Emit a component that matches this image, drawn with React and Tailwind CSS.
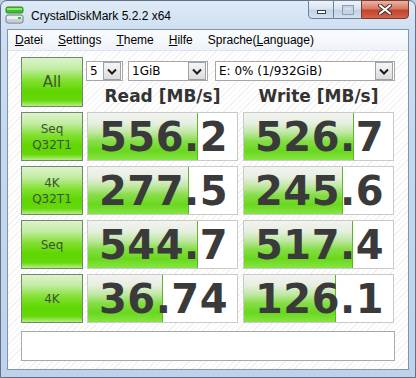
import React from 'react';

const ROWS = [
  { id: 'seq32', top: 'Seq', bottom: 'Q32T1', read: '556.2', rw: 0.74, write: '526.7', ww: 0.735 },
  { id: '4k32', top: '4K', bottom: 'Q32T1', read: '277.5', rw: 0.678, write: '245.6', ww: 0.667 },
  { id: 'seq', top: 'Seq', read: '544.7', rw: 0.737, write: '517.4', ww: 0.733 },
  { id: '4k', top: '4K', read: '36.74', rw: 0.5, write: '126.1', ww: 0.615 },
];

const greenBtn =
  'border border-[#72876c] bg-[linear-gradient(180deg,#dcf3cc_0%,#c2eca4_22%,#7fe02c_48%,#5fd600_70%,#66d80a_88%,#b4ee84_100%)] text-[#3e5233] font-["DejaVu_Sans",sans-serif] flex flex-col items-center justify-center leading-[16px]';

const Arrow = () => (
  <div className="w-[18px] h-[18px] border border-[#9aa3ad] bg-gradient-to-b from-[#f6f6f6] to-[#dcdcdc] flex items-center justify-center">
    <svg width="10" height="7" viewBox="0 0 10 7">
      <path d="M1 1.5 L5 5.5 L9 1.5" fill="none" stroke="#1c1c1c" strokeWidth="2" />
    </svg>
  </div>
);

const Select = ({ w, value }) => (
  <div className={`${w} h-[20px] bg-white border border-[#a7a7a7] flex items-center justify-between pl-[3px] pr-px text-[12px] text-black font-["DejaVu_Sans",sans-serif]`}>
    <span>{value}</span>
    <Arrow />
  </div>
);

const Cell = ({ value, fill }) => (
  <div className="relative w-[151px] h-[49px] bg-white border border-[#cacaca] flex items-center justify-end pr-[9px]">
    <div
      className="absolute left-0 top-0 bottom-0 border-r border-[#5cb82a] bg-[linear-gradient(180deg,#f3f3f1_0%,#e6efe0_22%,#bfe7a0_42%,#86dd48_60%,#69d81c_80%,#86e444_100%)]"
      style={{ width: `${fill * 100}%` }}
    />
    <span className='relative text-[40px] leading-none font-bold text-[#3a3a3a] font-["DejaVu_Sans",sans-serif] tracking-[0.5px]'>
      {value}
    </span>
  </div>
);

const DiskIcon = () => (
  <svg width="19" height="18" viewBox="0 0 19 18">
    <rect x="1" y="1" width="17" height="6" rx="1.5" fill="#3fbf2a" stroke="#2a8f1e" />
    <rect x="2" y="2" width="15" height="2" fill="#8fe57a" />
    <rect x="1" y="9" width="17" height="8" rx="2" fill="#eceff2" stroke="#6b7480" />
    <rect x="2" y="13" width="15" height="3" fill="#c9cfd6" />
    <rect x="13" y="11" width="3" height="2" fill="#39c22a" />
  </svg>
);

export default function App() {
  return (
    <div className="w-[416px] h-[378px] overflow-hidden bg-[#b9cde6]">
      <div className="w-[416px] h-[378px] rounded-t-[7px] border border-[#5f7189] bg-[linear-gradient(180deg,#dfeaf6_0%,#cddff2_8%,#c4d8ee_40%,#bed3eb_100%)] flex flex-col">
        {/* title bar */}
        <div className="h-[28px] relative flex items-center pl-[4px]">
          <DiskIcon />
          <span className='ml-[7px] mt-[1px] text-[12px] text-black font-["Liberation_Sans",sans-serif]'>CrystalDiskMark 5.2.2 x64</span>
          <div className="absolute right-[6px] top-[-1px] flex h-[19px]">
            <div className="w-[26px] h-full border border-[#6e7f96] rounded-bl-[4px] bg-[linear-gradient(180deg,#eef3f9_0%,#d9e4f1_45%,#c2d3e7_55%,#d3e1f0_100%)] flex items-center justify-center">
              <div className="w-[9px] h-[4px] mt-[5px] bg-white border border-[#34404f]" />
            </div>
            <div className="w-[27px] h-full border-y border-[#6e7f96] bg-[linear-gradient(180deg,#eef3f9_0%,#d9e4f1_45%,#c2d3e7_55%,#d3e1f0_100%)] flex items-center justify-center">
              <div className="w-[10px] h-[8px] border-2 border-[#c8d3e0] bg-transparent outline outline-1 outline-[#8f9db0]" />
            </div>
            <div className="w-[48px] h-full border border-[#7a3a33] rounded-br-[4px] bg-[linear-gradient(180deg,#eab3a5_0%,#d77b66_45%,#c4432c_55%,#d2654a_100%)] flex items-center justify-center">
              <svg width="14" height="11" viewBox="0 0 14 11">
                <path d="M2 1.5 L12 9.5 M12 1.5 L2 9.5" stroke="#3b2a28" strokeWidth="4" strokeLinecap="round" />
                <path d="M2 1.5 L12 9.5 M12 1.5 L2 9.5" stroke="#ffffff" strokeWidth="2.2" strokeLinecap="round" />
              </svg>
            </div>
          </div>
        </div>

        {/* client */}
        <div className="mx-[6px] mb-[7px] flex-1 border border-[#8395ad] flex flex-col bg-white">
          <div className='h-[21px] border-b border-[#dde4ee] bg-gradient-to-b from-[#fbfcfe] to-[#eef3f9] flex items-center pl-[7px] gap-[15px] text-[12px] text-black font-["Liberation_Sans",sans-serif]'>
            <span><span className="underline">D</span>atei</span>
            <span><span className="underline">S</span>ettings</span>
            <span><span className="underline">T</span>heme</span>
            <span><span className="underline">H</span>ilfe</span>
            <span>Sprache(<span className="underline">L</span>anguage)</span>
          </div>

          <div className="flex-1 bg-[repeating-linear-gradient(135deg,#ffffff_0px,#ffffff_3px,#f1f1f1_3px,#f1f1f1_4px)] pl-[13px] pt-[6px]">
            <div className="flex h-[50px]">
              <div className={`${greenBtn} w-[62px] h-[50px] text-[15px]`}>All</div>
              <div className="ml-[3px] flex flex-col">
                <div className="mt-[4px] flex">
                  <Select w="w-[37px]" value="5" />
                  <div className="ml-[5px]"><Select w="w-[80px]" value="1GiB" /></div>
                  <div className="ml-[7px]"><Select w="w-[180px]" value="E: 0% (1/932GiB)" /></div>
                </div>
                <div className='ml-[1px] mt-[5px] flex text-[17px] font-bold text-[#333] font-["DejaVu_Sans",sans-serif] leading-[20px]'>
                  <div className="w-[151px] text-center">Read [MB/s]</div>
                  <div className="ml-[5px] w-[151px] text-center">Write [MB/s]</div>
                </div>
              </div>
            </div>

            <div className="mt-[5px] flex flex-col gap-[5px]">
              {ROWS.map((r) => (
                <div key={r.id} className="flex">
                  <div className={`${greenBtn} w-[62px] h-[49px] text-[12px]`}>
                    <span>{r.top}</span>
                    {r.bottom && <span>{r.bottom}</span>}
                  </div>
                  <div className="ml-[4px]"><Cell value={r.read} fill={r.rw} /></div>
                  <div className="ml-[5px]"><Cell value={r.write} fill={r.ww} /></div>
                </div>
              ))}
            </div>

            <div className="mt-[8px] w-[374px] h-[30px] bg-white border border-[#a9a9a9]" />
          </div>
        </div>
      </div>
    </div>
  );
}
